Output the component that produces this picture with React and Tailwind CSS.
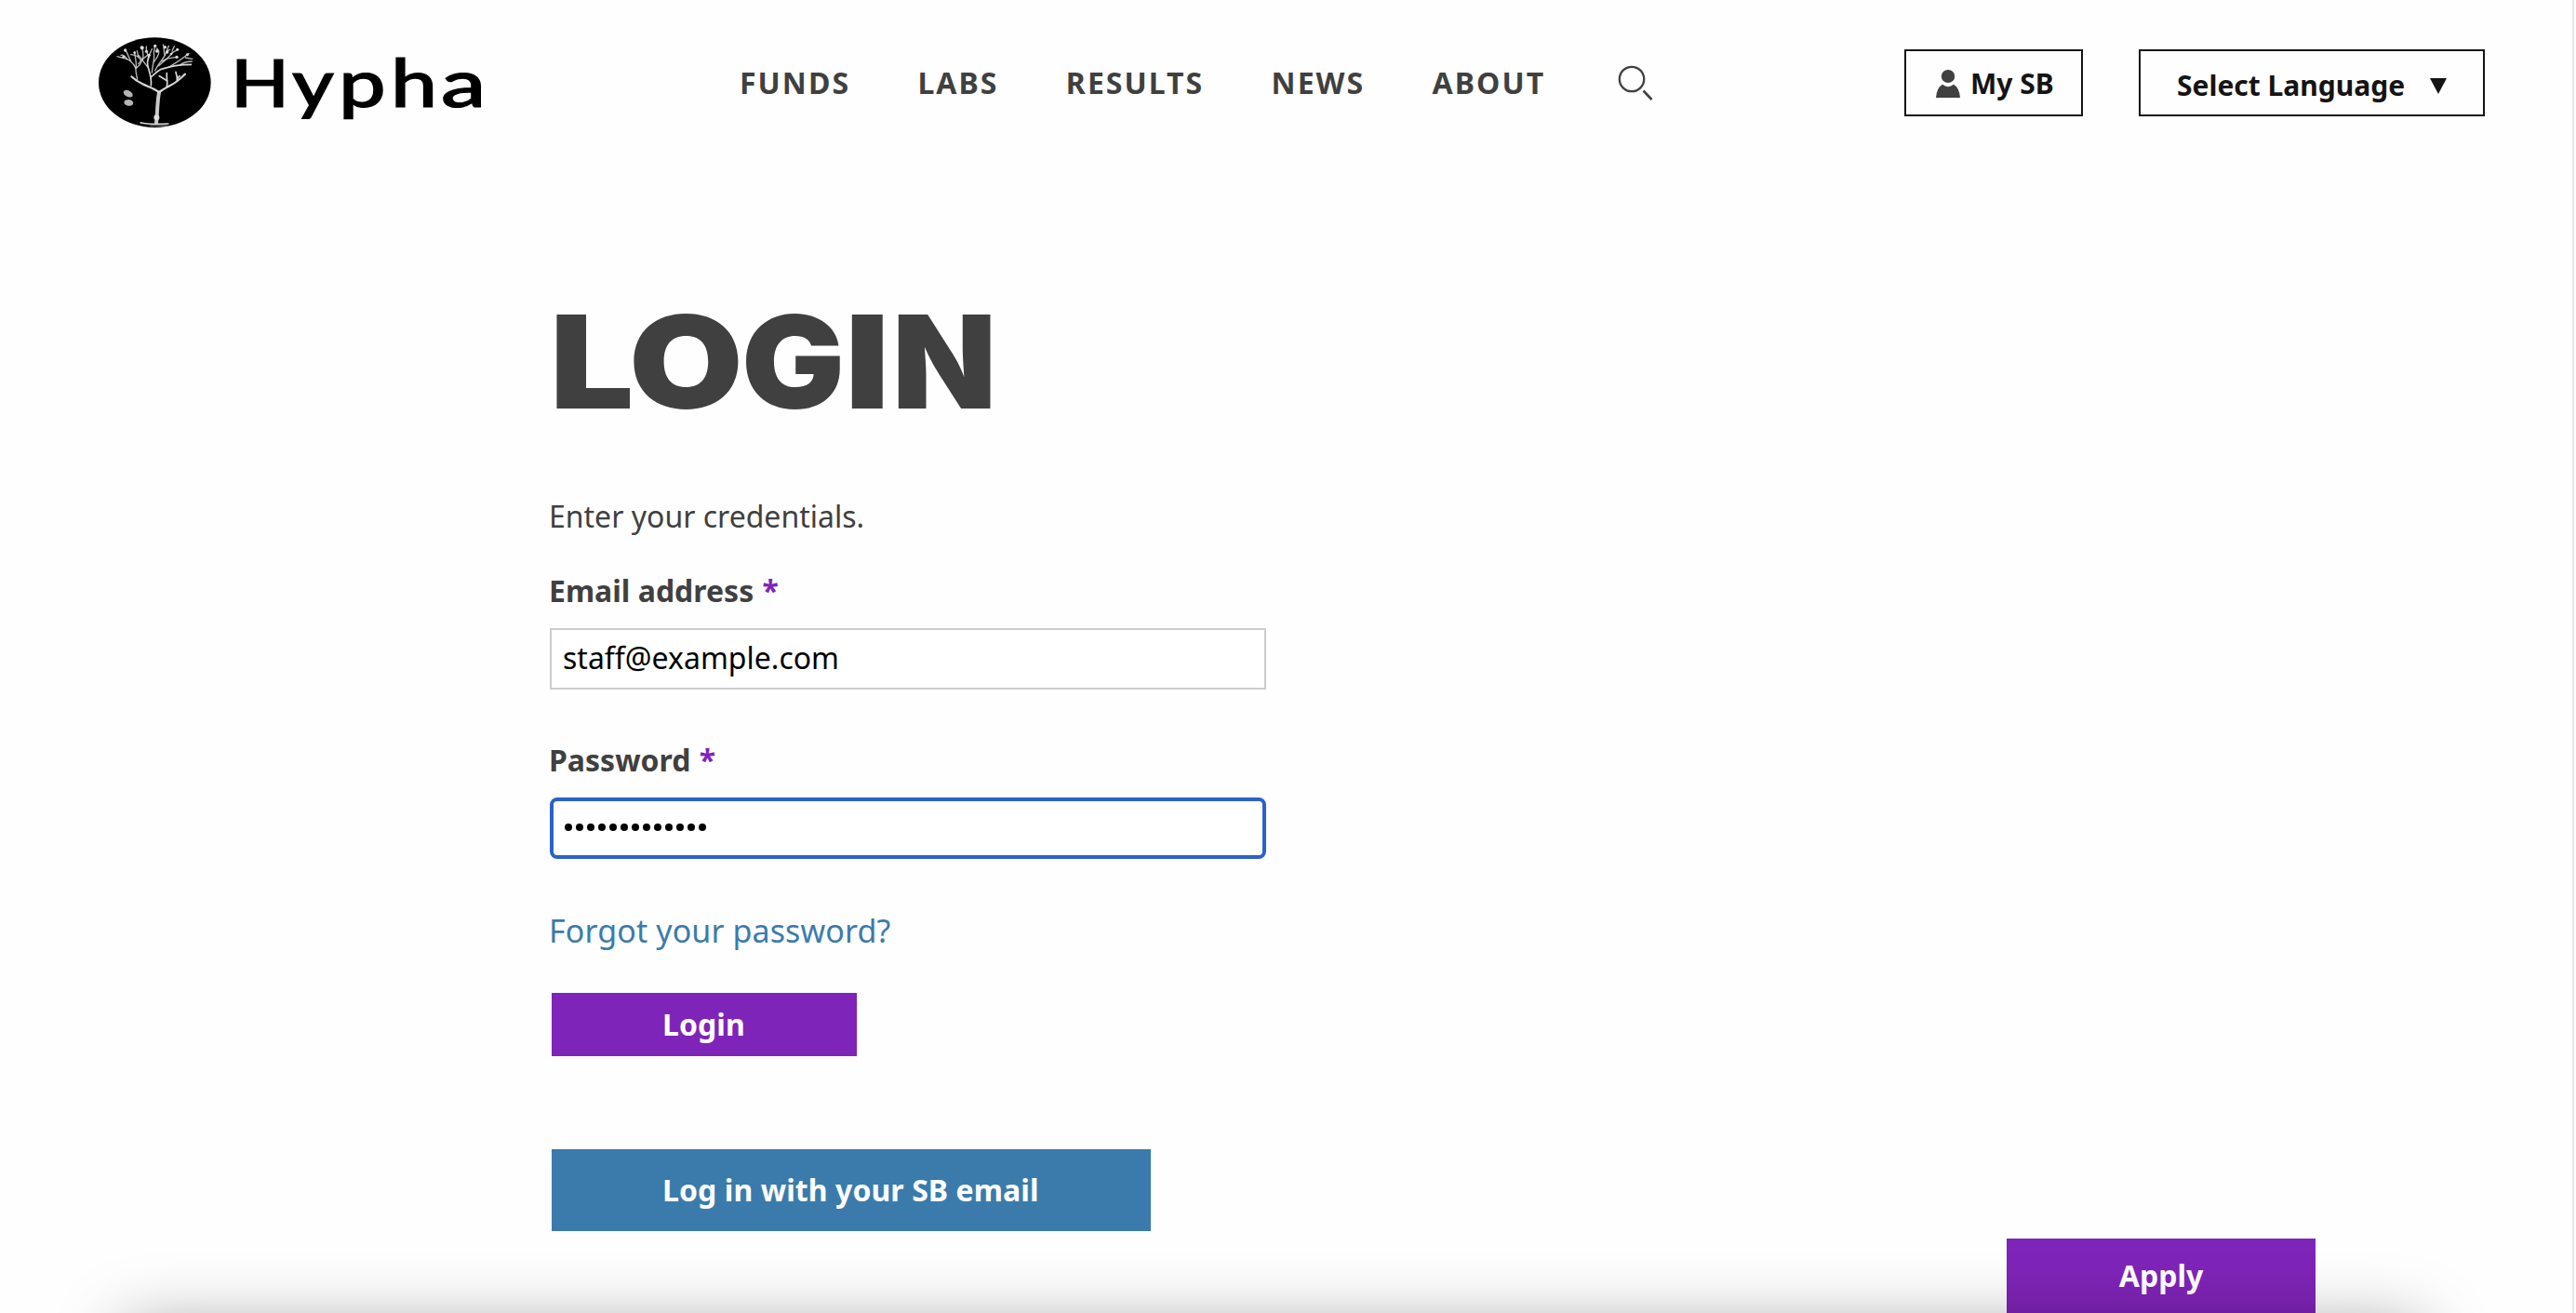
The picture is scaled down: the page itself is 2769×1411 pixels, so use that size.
const navItems = ['FUNDS', 'LABS', 'RESULTS', 'NEWS', 'ABOUT'];

const wordmark = [
  ['H', 'w-[65.5px] scale-x-[1.16]'],
  ['y', 'w-[50px] scale-x-[1.22]'],
  ['p', 'w-[56px] scale-x-[1.27]'],
  ['h', 'w-[54.5px] scale-x-[1.26]'],
  ['a', 'w-[50px] scale-x-[1.36]'],
];

const headline = [
  ['L', 'w-[84.5px] scale-x-[1.15]'],
  ['O', 'w-[121px] scale-x-[1.14]'],
  ['G', 'w-[111.5px] scale-x-[1.06]'],
  ['I', 'w-[51px] scale-x-[1.2]'],
  ['N', 'w-[110px] scale-x-[1.05]'],
];

const branches = [
  'M213 190 C198 176 178 172 160 163 C145 156 134 149 124 139',
  'M213 190 C232 174 252 168 268 156 C280 147 288 139 297 131',
  'M238 170 C242 156 236 146 238 128',
  'M239 152 C229 148 222 141 214 137',
  'M271 153 C274 142 268 134 267 124',
  'M271 146 L279 137',
  'M187 168 C190 148 184 130 178 110 C173 97 176 84 181 70',
  'M187 140 C200 130 203 124 220 115 C245 108 268 102 292 101 L316 100',
  'M280 102 C290 94 302 90 319 90',
  'M245 108 C266 96 286 84 309 64',
  'M298 78 L320 82',
  'M143 148 C140 132 137 122 138 112 C130 96 116 82 100 80 L78 74',
  'M110 83 C102 72 98 68 90 70',
  'M138 112 C150 104 156 96 156 88 C148 76 134 68 122 68',
  'M122 88 C112 74 112 62 104 54',
  'M138 112 C142 96 136 82 134 60',
  'M146 98 C156 84 166 76 176 70',
  'M178 110 C166 96 156 80 146 70',
  'M160 84 C164 70 162 60 158 46',
  'M181 78 C174 64 170 56 172 42',
  'M190 126 C192 100 200 80 196 62 L200 40',
  'M196 92 C204 80 214 72 212 56 L206 48',
  'M200 120 C210 98 224 84 232 70 L244 40',
  'M222 90 C232 82 246 78 270 76',
  'M232 70 C226 62 232 50 226 36',
  'M212 104 C226 92 250 72 256 62 L272 52',
  'M256 62 C252 54 260 48 262 42',
  'M240 56 L248 52',
  'M183 66 L190 50',
  'M146 76 L142 56',
];

const blossoms = [[104, 54, 5], [158, 46, 6], [200, 40, 5], [206, 57, 5], [172, 58, 4.5], [232, 44, 5], [239, 60, 5], [270, 76, 5], [272, 52, 4.5], [304, 68, 4.5], [181, 70, 4.5], [98, 76, 4], [252, 66, 4], [134, 62, 4]];

function TreeMark() {
  return (
    <svg className="block h-[106px] w-[132px] blur-[0.5px]" viewBox="0 0 396 318" aria-hidden="true">
      <ellipse cx="199" cy="158" rx="181" ry="145" fill="#000" />
      <g fill="none" stroke="#d8d8d8" strokeLinecap="round">
        <path d="M213 190 C207 220 208 250 204 288" strokeWidth="12" stroke="#c9c9c9" />
        {branches.map((d, i) => (
          <path key={d} d={d} strokeWidth={i < 2 ? 6.5 : i < 8 ? 5 : 4} opacity={i < 8 ? 1 : 0.85} />
        ))}
        <path d="M153 287 C180 294 215 292 243 291" strokeWidth="4.5" />
        <path d="M185 297 H238" strokeWidth="3" opacity=".7" />
      </g>
      <g fill="#ddd">
        {blossoms.map(([x, y, r]) => (
          <circle key={`${x}-${y}`} cx={x} cy={y} r={r} />
        ))}
      </g>
      <circle cx="205" cy="271" r="9" fill="#ddd" />
      <g fill="#b5b5b5">
        <ellipse cx="113" cy="194" rx="16" ry="10" transform="rotate(28 113 194)" />
        <ellipse cx="115" cy="223" rx="15" ry="10" transform="rotate(8 115 223)" />
      </g>
    </svg>
  );
}

function Letters({ items }) {
  return items.map(([letter, shape]) => (
    <span key={letter} className={`inline-block origin-left ${shape}`}>{letter}</span>
  ));
}

function FieldLabel({ htmlFor, children, className }) {
  return (
    <label htmlFor={htmlFor} className={`block text-[32px] leading-[44px] font-bold ${className}`}>
      {children} <span className="ml-px text-[#7f24b8]">*</span>
    </label>
  );
}

export default function App() {
  return (
    <div className="relative h-[1411px] w-[2769px] overflow-hidden bg-[#fefefe] font-['Noto_Sans',sans-serif] text-[#404040]">
      <header className="flex h-[180px] items-start">
        <a className="flex w-[795px] items-start pt-[36px] pl-[100px]">
          <TreeMark />
          <span className="mt-[9px] ml-[16px] whitespace-nowrap font-['Lato',sans-serif] text-[71px] leading-[86px] font-medium text-black [-webkit-text-stroke:1.2px_black]">
            <Letters items={wordmark} />
          </span>
        </a>
        <nav className="flex gap-[72.3px] pt-[67px]">
          {navItems.map((item) => (
            <a key={item} className="text-[32px] leading-[44px] font-bold tracking-[2.05px]">
              {item}
            </a>
          ))}
        </nav>
        <svg className="mt-[69px] ml-[76px] h-10 w-10" viewBox="0 0 40 40" fill="none" stroke="#404040" aria-hidden="true">
          <circle cx="17" cy="16" r="13.2" strokeWidth="2.3" />
          <path d="M29.5 28.5 L38.5 38" strokeWidth="2.6" />
        </svg>
        <div className="mt-[53px] mr-[98px] ml-auto flex gap-[60px]">
          <a className="flex h-[72px] w-[192px] items-center border-2 border-[#141414] pt-px pl-[31px]">
            <svg className="mt-px h-[32px] w-[28px]" viewBox="0 0 28 32" fill="#404040" aria-hidden="true">
              <ellipse cx="14" cy="8" rx="7.2" ry="7" />
              <path d="M8 16.8 Q14 21.5 20 16.8 Q26 20 27 31 H1 Q2 20 8 16.8Z" />
            </svg>
            <span className="mt-px ml-[10px] text-[30px] leading-[44px] font-bold text-[#141414]">My SB</span>
          </a>
          <a className="flex h-[72px] w-[372px] items-center border-2 border-[#141414] pt-[6px] pl-[39px]">
            <span className="text-[30px] leading-[44px] font-bold text-[#141414]">Select Language</span>
            <svg className="ml-[27px] h-[17px] w-[18px]" viewBox="0 0 18 17" fill="#141414" aria-hidden="true">
              <path d="M0 0 H18 L9 17Z" />
            </svg>
          </a>
        </div>
      </header>

      <main className="flex flex-col items-start pt-[139px] pl-[591px]">
        <h1 className="font-['Inter',sans-serif] text-[139px] leading-[140px] font-black whitespace-nowrap">
          <Letters items={headline} />
        </h1>
        <p className="-ml-px mt-[74px] text-[32px] leading-[44px]">Enter your credentials.</p>
        <form className="flex w-[770px] flex-col items-start">
          <FieldLabel htmlFor="email" className="-ml-px mt-[36px]">Email address</FieldLabel>
          <input
            id="email"
            type="email"
            readOnly
            defaultValue="staff@example.com"
            className="mt-[18px] h-[66px] w-full border-2 border-[#ccc] bg-white px-[12px] pb-[3px] text-[32px] text-black outline-none"
          />
          <FieldLabel htmlFor="password" className="-ml-px mt-[54px]">Password</FieldLabel>
          <div
            id="password"
            className="mt-[18px] flex h-[66px] w-full items-center gap-[4px] rounded-[8px] border-4 border-[#2a62c9] bg-white pb-[2px] pl-[12px]"
          >
            {Array.from({ length: 13 }, (_, i) => (
              <span key={i} className="size-[8px] rounded-full bg-black" />
            ))}
          </div>
          <a className="-ml-px mt-[54px] text-[34px] leading-[46px] tracking-[0.1px] text-[#3b7bab]">Forgot your password?</a>
          <button type="button" className="mt-[44px] ml-[2px] h-[68px] w-[328px] bg-[#7f24b8] pl-[119px] text-left text-[32px] leading-[44px] font-bold tracking-[0.08px] text-white">
            Login
          </button>
          <button type="button" className="mt-[100px] ml-[2px] h-[88px] w-[644px] bg-[#3b7bab] pl-[119px] text-left text-[32px] leading-[44px] font-bold tracking-[0.08px] text-white">
            Log in with your SB email
          </button>
        </form>
      </main>

      <a className="absolute bottom-0 left-[2157px] h-[80px] w-[332px] bg-[#7f24b8] pt-[18px] text-center text-[32px] leading-[44px] font-bold text-white">
        Apply
      </a>
      <div className="absolute top-[1426px] left-[132px] h-[200px] w-[2471px] shadow-[0_0_72px_rgba(0,0,0,0.37)]" />
      <div className="absolute inset-y-0 right-[2px] w-[2px] bg-[#e6e6e6]" />
    </div>
  );
}
